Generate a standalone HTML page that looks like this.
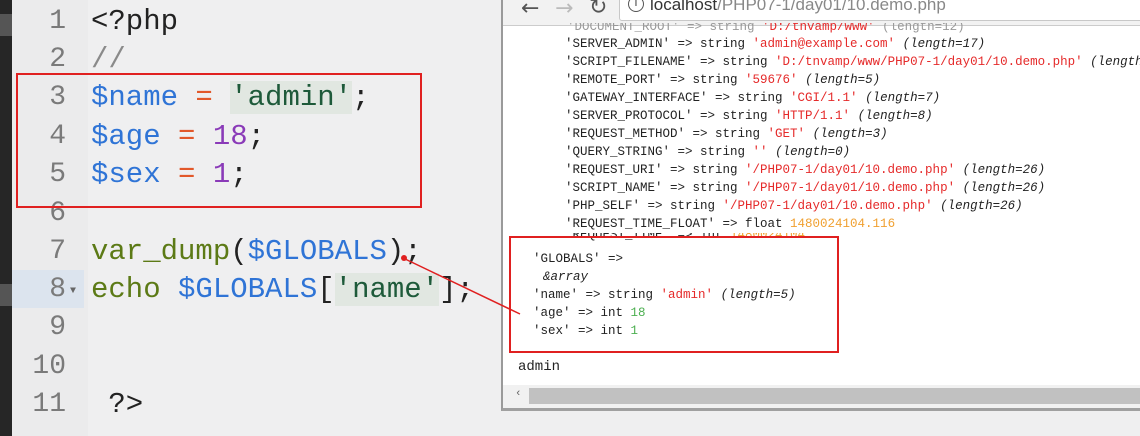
<!DOCTYPE html>
<html><head><meta charset="utf-8">
<style>
*{margin:0;padding:0;box-sizing:border-box}
body{width:1140px;height:436px;overflow:hidden;background:#efeff0;position:relative;font-family:"Liberation Mono",monospace}
.dark{position:absolute;left:0;top:0;width:12px;height:436px;background:#262626}
.dark i{position:absolute;left:0;width:12px;height:22px;background:#555}
.gut{position:absolute;left:12px;top:0;width:76px;height:436px;background:#ebebec}
.hl{position:absolute;left:12px;top:270px;width:72px;height:38px;background:#dce4ee}
.ln{position:absolute;left:12px;width:54px;text-align:right;font-size:28px;color:#7a7a7a;line-height:38px}
.code{position:absolute;left:91px;font-size:29px;line-height:38px;white-space:pre;color:#222}
.v{color:#2f74d6}.o{color:#e2582a}.s{color:#1e5a3a;background:#e1e7e1}.n{color:#8a3ab8}.f{color:#5c7a16}.c{color:#8a8a8a}
.box{position:absolute;border:2px solid #e02020}
.br{position:absolute;left:501px;top:0;width:639px;height:411px;background:#fff;border-left:2px solid #9a9a9a;border-bottom:3px solid #a0a0a0}
.bar{position:absolute;left:0;top:0;width:100%;height:26px;background:#f2f2f2;border-bottom:1px solid #ccc}
.addr{position:absolute;left:116px;top:-6px;width:540px;height:27px;background:#fff;border:1px solid #c8c8c8;border-radius:3px;font-family:"Liberation Sans",sans-serif;font-size:17px;color:#333;padding-left:30px;line-height:20px}
.t{position:absolute;font-size:12.5px;line-height:18px;white-space:pre;color:#222;font-family:"Liberation Mono",monospace}
.r{color:#e52a2a}.y{color:#f0a030}.g{color:#4caf50}.i{font-style:italic}
.sb{position:absolute;left:0;top:385px;width:100%;height:23px;background:#f1f1f1}
.sb div{position:absolute;left:26px;top:3px;right:0;height:16px;background:#c1c1c1}
</style></head><body>
<div class="dark"><i style="top:14px"></i><i style="top:284px"></i></div>
<div class="gut"></div>
<div class="hl"></div>
<div class="ln" style="top:3px">1</div>
<div class="ln" style="top:41px">2</div>
<div class="ln" style="top:79px">3</div>
<div class="ln" style="top:118px">4</div>
<div class="ln" style="top:156px">5</div>
<div class="ln" style="top:195px">6</div>
<div class="ln" style="top:233px">7</div>
<div class="ln" style="top:271px">8</div>
<div style="position:absolute;left:70px;top:286px;font-size:10px;color:#666">▼</div>
<div class="ln" style="top:309px">9</div>
<div class="ln" style="top:348px">10</div>
<div class="ln" style="top:386px">11</div>
<div class="code" style="top:3px">&lt;?php</div>
<div class="code c" style="top:41px">//</div>
<div class="code" style="top:79px"><span class="v">$name</span> <span class="o">=</span> <span class="s">'admin'</span>;</div>
<div class="code" style="top:118px"><span class="v">$age</span> <span class="o">=</span> <span class="n">18</span>;</div>
<div class="code" style="top:156px"><span class="v">$sex</span> <span class="o">=</span> <span class="n">1</span>;</div>
<div class="code" style="top:233px"><span class="f">var_dump</span>(<span class="v">$GLOBALS</span>);</div>
<div class="code" style="top:271px"><span class="f">echo</span> <span class="v">$GLOBALS</span>[<span class="s">'name'</span>];</div>
<div class="code" style="top:386px"> ?&gt;</div>
<div class="box" style="left:16px;top:73px;width:406px;height:135px"></div>

<div class="br">
<div class="bar">
<div style="position:absolute;left:18px;top:-4px;font-size:22px;color:#555;font-family:'DejaVu Sans',sans-serif">←</div>
<div style="position:absolute;left:52px;top:-4px;font-size:22px;color:#bbb;font-family:'DejaVu Sans',sans-serif">→</div>
<div style="position:absolute;left:86px;top:-5px;font-size:22px;color:#555;font-family:'DejaVu Sans',sans-serif">↻</div>
<div class="addr"><span style="position:absolute;left:8px;top:1px;width:16px;height:16px;border:1.5px solid #555;border-radius:50%;font-size:11px;text-align:center;line-height:13px">i</span>localhost<span style="color:#888">/PHP07-1/day01/10.demo.php</span></div>
</div>
<div class="t" style="left:64px;top:23px;color:#999;height:10px;overflow:hidden;line-height:8px">'DOCUMENT_ROOT' =&gt; string <span class="r">'D:/tnvamp/www'</span> (length=12)</div>
<div class="t" style="left:62px;top:35px">'SERVER_ADMIN' =&gt; string <span class="r">'admin@example.com'</span> <span class="i">(length=17)</span></div>
<div class="t" style="left:62px;top:53px">'SCRIPT_FILENAME' =&gt; string <span class="r">'D:/tnvamp/www/PHP07-1/day01/10.demo.php'</span> <span class="i">(length</span></div>
<div class="t" style="left:62px;top:71px">'REMOTE_PORT' =&gt; string <span class="r">'59676'</span> <span class="i">(length=5)</span></div>
<div class="t" style="left:62px;top:89px">'GATEWAY_INTERFACE' =&gt; string <span class="r">'CGI/1.1'</span> <span class="i">(length=7)</span></div>
<div class="t" style="left:62px;top:107px">'SERVER_PROTOCOL' =&gt; string <span class="r">'HTTP/1.1'</span> <span class="i">(length=8)</span></div>
<div class="t" style="left:62px;top:125px">'REQUEST_METHOD' =&gt; string <span class="r">'GET'</span> <span class="i">(length=3)</span></div>
<div class="t" style="left:62px;top:143px">'QUERY_STRING' =&gt; string <span class="r">''</span> <span class="i">(length=0)</span></div>
<div class="t" style="left:62px;top:161px">'REQUEST_URI' =&gt; string <span class="r">'/PHP07-1/day01/10.demo.php'</span> <span class="i">(length=26)</span></div>
<div class="t" style="left:62px;top:179px">'SCRIPT_NAME' =&gt; string <span class="r">'/PHP07-1/day01/10.demo.php'</span> <span class="i">(length=26)</span></div>
<div class="t" style="left:62px;top:197px">'PHP_SELF' =&gt; string <span class="r">'/PHP07-1/day01/10.demo.php'</span> <span class="i">(length=26)</span></div>
<div class="t" style="left:62px;top:215px">'REQUEST_TIME_FLOAT' =&gt; float <span class="y">1480024104.116</span></div>
<div class="t" style="left:62px;top:233px;height:9px;overflow:hidden;line-height:4px">'REQUEST_TIME' =&gt; int <span class="y">1480024104</span></div>
<div class="t" style="left:30px;top:250px">'GLOBALS' =&gt;</div>
<div class="t i" style="left:40px;top:268px">&amp;array</div>
<div class="t" style="left:30px;top:286px">'name' =&gt; string <span class="r">'admin'</span> <span class="i">(length=5)</span></div>
<div class="t" style="left:30px;top:304px">'age' =&gt; int <span class="g">18</span></div>
<div class="t" style="left:30px;top:322px">'sex' =&gt; int <span class="g">1</span></div>
<div class="t" style="left:15px;top:358px;font-size:14px">admin</div>
<div class="sb"><span style="position:absolute;left:12px;top:3px;font-size:11px;color:#666">‹</span><div></div></div>
</div>
<div class="box" style="left:509px;top:236px;width:330px;height:117px"></div>
<svg style="position:absolute;left:0;top:0" width="1140" height="436"><line x1="403" y1="258" x2="520" y2="314" stroke="#e02020" stroke-width="1.5"/><circle cx="404" cy="258" r="3" fill="#e02020"/></svg>
</body></html>
